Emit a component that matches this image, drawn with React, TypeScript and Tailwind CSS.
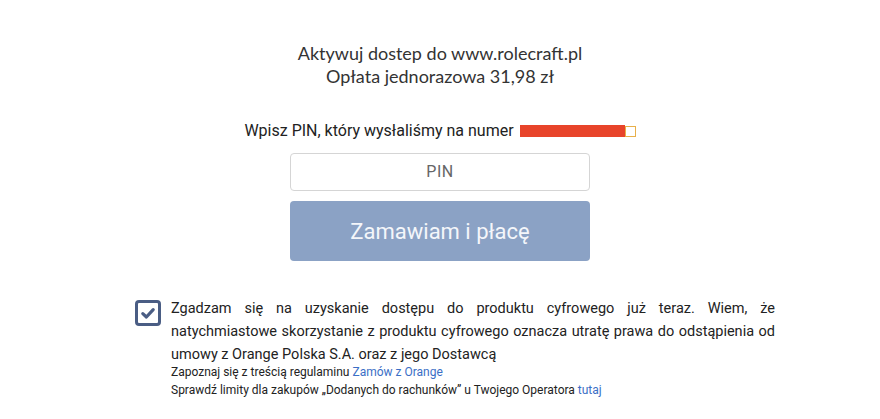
import React from 'react';

export default function App() {
  return (
    <div className="w-[880px] h-[419px] bg-white text-[#333] overflow-hidden" style={{ fontFamily: 'Roboto, "Liberation Sans", sans-serif' }}>
      <div className="flex flex-col items-center pt-[42px]">
        <div className="text-center text-[18px] leading-[23px] text-[#333]" style={{ fontFamily: 'Lato, "Liberation Sans", sans-serif' }}>
          <div>Aktywuj dostep do www.rolecraft.pl</div>
          <div>Opłata jednorazowa 31,98 zł</div>
        </div>
        <div className="mt-[33px] flex items-center text-[16px] leading-[20px] text-[#222]">
          <span>Wpisz PIN, który wysłaliśmy na numer</span>
          <span className="ml-[6px] inline-block w-[105px] h-[12px] bg-[#e8442a]" />
          <span className="inline-block w-[11px] h-[11px] border border-[#e8b04a] bg-white" />
        </div>
        <div className="mt-[12px] w-[300px] h-[38px] rounded-[4px] border border-[#d5d5d5] flex items-center justify-center text-[16px] tracking-[0.5px] text-[#666]">
          PIN
        </div>
        <button className="mt-[10px] w-[300px] h-[60px] rounded-[4px] bg-[#8ba2c5] text-[#f4f6fa] text-[22px] flex items-center justify-center">
          Zamawiam i płacę
        </button>
      </div>
      <div className="flex items-start mt-[36px] pl-[135px] pr-[105px]">
        <div className="shrink-0 mt-[3px] w-[26px] h-[26px] rounded-[4px] border-[3px] border-[#4a5d84] flex items-center justify-center">
          <svg width="16" height="16" viewBox="0 0 16 16">
            <path d="M2.8 8.6 L6.4 12 L13.2 4.6" fill="none" stroke="#4a5d84" strokeWidth="3.2" strokeLinecap="round" strokeLinejoin="round" />
          </svg>
        </div>
        <div className="ml-[10px] flex-1">
          <p className="text-[14.5px] leading-[23px] text-justify text-[#222]">
            Zgadzam się na uzyskanie dostępu do produktu cyfrowego już teraz. Wiem, że natychmiastowe skorzystanie z produktu cyfrowego oznacza utratę prawa do odstąpienia od umowy z Orange Polska S.A. oraz z jego Dostawcą
          </p>
          <p className="-mt-[3px] text-[12px] leading-[18px] text-[#222]">
            Zapoznaj się z treścią regulaminu <a className="text-[#3b6fc6]">Zamów z Orange</a>
          </p>
          <p className="text-[12px] leading-[18px] text-[#222]">
            Sprawdź limity dla zakupów „Dodanych do rachunków” u Twojego Operatora <a className="text-[#3b6fc6]">tutaj</a>
          </p>
        </div>
      </div>
    </div>
  );
}
